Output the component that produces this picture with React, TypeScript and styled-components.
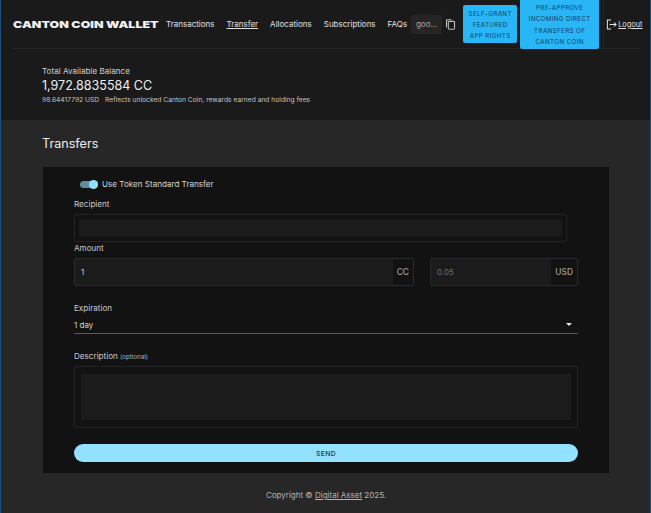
import { createGlobalStyle } from "styled-components";
import styled from "styled-components";

const GlobalStyle = createGlobalStyle`
html, body { margin: 0; padding: 0; background: #272727; }
* { box-sizing: border-box; }
`;

const Page = styled.div`
    width: 651px;
    height: 513px;
    overflow: hidden;
    border-left: 1px solid #1d4f7c;
    border-right: 1px solid #1d4f7c;
    background: #272727;
    color: #e4e4e4;
    font-family: Inter, "Liberation Sans", sans-serif;
`;

const Header = styled.header`
    height: 120px;
    background: #1a1a1a;
`;

const Nav = styled.nav`
    height: 49px;
    margin: 0 10px 0 12px;
    border-bottom: 1px solid #242424;
    display: flex;
    align-items: center;
`;

const Logo = styled.div`
    width: 153px;
    flex: none;
    font-size: 9.6px;
    font-weight: 900;
    letter-spacing: 0;
    color: #f2f2f2;
    white-space: nowrap;
    transform: scaleX(1.3);
    transform-origin: left center;
`;

const NavLink = styled.a<{ $active?: boolean; $gap: number }>`
    font-size: 8px;
    color: #e0e0e0;
    margin-right: ${(p) => p.$gap}px;
    white-space: nowrap;
    text-decoration: ${(p) => (p.$active ? "underline" : "none")};
`;

const PartyChip = styled.div`
    width: 31px;
    height: 19px;
    flex: none;
    border-radius: 3px;
    background: #252525;
    color: #a9a9a9;
    font-size: 8px;
    display: flex;
    align-items: center;
    justify-content: center;
`;

const CopyIcon = styled.svg`
    width: 11px;
    height: 11px;
    margin: 0 7px 0 3px;
    flex: none;
`;

const ActionButton = styled.button<{ $width: number; $height: number; $gap: number }>`
    width: ${(p) => p.$width}px;
    height: ${(p) => p.$height}px;
    flex: none;
    margin-right: ${(p) => p.$gap}px;
    padding: 1px 0 0;
    border: none;
    border-radius: 2px;
    background: #29b6f6;
    color: #14425c;
    font-family: inherit;
    font-size: 6.2px;
    font-weight: 400;
    line-height: 11.2px;
    letter-spacing: 0.4px;
    text-align: center;
`;

const LogoutArea = styled.div`
    align-self: stretch;
    border-left: 1px solid #242424;
    padding-left: 2px;
    display: flex;
    align-items: center;
    gap: 1px;
`;

const LogoutLink = styled.a`
    font-size: 7.4px;
    color: #e0e0e0;
    text-decoration: underline;
`;

const Balance = styled.section`
    padding: 17px 0 0 41px;
`;

const BalanceLabel = styled.div`
    font-size: 8.1px;
    line-height: 11px;
    color: #cfcfcf;
`;

const BalanceAmount = styled.div`
    font-size: 12.5px;
    line-height: 17px;
    color: #f0f0f0;
`;

const BalanceNote = styled.div`
    font-size: 6.7px;
    line-height: 10px;
    margin-top: 1px;
    color: #c4c4c4;
    display: flex;
    gap: 6px;
`;

const Main = styled.main`
    padding: 15px 41px 0 42px;
`;

const Title = styled.h1`
    margin: 0 0 15px -1px;
    font-size: 12.6px;
    line-height: 17px;
    font-weight: 400;
    color: #ececec;
`;

const Card = styled.div`
    height: 306px;
    background: #121212;
    padding: 0 31px;
`;

const SwitchRow = styled.div`
    height: 32px;
    padding: 2px 0 0 6px;
    display: flex;
    align-items: center;
    gap: 4px;
    font-size: 8.1px;
    color: #d4d4d4;
`;

const SwitchTrack = styled.div`
    position: relative;
    width: 18px;
    height: 7px;
    border-radius: 4px;
    background: #5f8c9f;
`;

const SwitchThumb = styled.div`
    position: absolute;
    right: 0;
    top: -1px;
    width: 9px;
    height: 9px;
    border-radius: 50%;
    background: #90e0ff;
`;

const Label = styled.label<{ $top?: number }>`
    display: block;
    font-size: 8.1px;
    line-height: 10px;
    color: #c9c9c9;
    margin-top: ${(p) => p.$top ?? 0}px;
`;

const OptionalNote = styled.span`
    font-size: 6.2px;
    line-height: 0;
    color: #b5b5b5;
`;

const EmptyField = styled.div<{ $width: number; $height: number; $padX: number; $padY: number }>`
    width: ${(p) => p.$width}px;
    height: ${(p) => p.$height}px;
    padding: ${(p) => p.$padY}px ${(p) => p.$padX}px;
    margin-top: 5px;
    border: 1px solid #232323;
    border-radius: 2px;
`;

const FieldFill = styled.div`
    height: 100%;
    background: #1b1b1b;
`;

const AmountRow = styled.div`
    display: grid;
    grid-template-columns: 340px 148px;
    column-gap: 16px;
    margin-top: 5px;
`;

const AmountField = styled.div`
    height: 28px;
    display: flex;
    border: 1px solid #2b2b2b;
    border-radius: 2px;
    background: #1b1b1b;
`;

const AmountValue = styled.div<{ $muted?: boolean }>`
    flex: 1;
    padding-left: 6px;
    display: flex;
    align-items: center;
    font-size: 8px;
    color: ${(p) => (p.$muted ? "#6f6f6f" : "#d0d0d0")};
`;

const Unit = styled.div`
    flex: none;
    padding: 0 4px;
    background: #121212;
    display: flex;
    align-items: center;
    justify-content: center;
    font-size: 8.4px;
    font-weight: 500;
    color: #a0a0a0;
`;

const Select = styled.div`
    height: 18px;
    margin-top: 3px;
    padding: 0 6px 0 0;
    border-bottom: 1px solid #5a5a5a;
    display: flex;
    align-items: center;
    justify-content: space-between;
    font-size: 8px;
    color: #d4d4d4;
`;

const Caret = styled.div`
    width: 0;
    height: 0;
    border-left: 3px solid transparent;
    border-right: 3px solid transparent;
    border-top: 3px solid #e8e8e8;
`;

const SendButton = styled.button`
    display: block;
    width: 100%;
    height: 18px;
    margin-top: 16px;
    padding: 0;
    border: none;
    border-radius: 9px;
    background: #92e2ff;
    color: #24363f;
    font-family: inherit;
    font-size: 6.8px;
    font-weight: 500;
    letter-spacing: 0.4px;
`;

const Footer = styled.footer`
    margin-top: 16px;
    text-align: center;
    font-size: 8px;
    line-height: 12px;
    color: #b4b4b4;
    a {
        color: inherit;
        text-decoration: underline;
    }
`;

const App = () => {
    return (
        <Page>
            <GlobalStyle />
            <Header>
                <Nav>
                    <Logo>CANTON COIN WALLET</Logo>
                    <NavLink $gap={12}>Transactions</NavLink>
                    <NavLink $gap={12} $active>Transfer</NavLink>
                    <NavLink $gap={12}>Allocations</NavLink>
                    <NavLink $gap={12}>Subscriptions</NavLink>
                    <NavLink $gap={4}>FAQs</NavLink>
                    <PartyChip>goo...</PartyChip>
                    <CopyIcon viewBox="0 0 12 12" fill="none" stroke="#bdbdbd" strokeWidth="1.2">
                        <rect x="3.6" y="2.6" width="6.8" height="8.6" rx="1" />
                        <path d="M1.6 9V1.8a1 1 0 0 1 1-1H7" />
                    </CopyIcon>
                    <ActionButton $width={54} $height={38} $gap={3}>
                        SELF-GRANT
                        <br />
                        FEATURED
                        <br />
                        APP RIGHTS
                    </ActionButton>
                    <ActionButton $width={79} $height={50} $gap={4}>
                        PRE-APPROVE
                        <br />
                        INCOMING DIRECT
                        <br />
                        TRANSFERS OF
                        <br />
                        CANTON COIN
                    </ActionButton>
                    <LogoutArea>
                        <svg width="11" height="11" viewBox="0 0 12 12" fill="none" stroke="#e4e4e4" strokeWidth="1.1">
                            <path d="M5.5 1H1.5v10h4" />
                            <path d="M4 6h7M8.8 3.8 11 6 8.8 8.2" />
                        </svg>
                        <LogoutLink>Logout</LogoutLink>
                    </LogoutArea>
                </Nav>
                <Balance>
                    <BalanceLabel>Total Available Balance</BalanceLabel>
                    <BalanceAmount>1,972.8835584 CC</BalanceAmount>
                    <BalanceNote>
                        <span>98.64417792 USD</span>
                        <span>Reflects unlocked Canton Coin, rewards earned and holding fees</span>
                    </BalanceNote>
                </Balance>
            </Header>
            <Main>
                <Title>Transfers</Title>
                <Card>
                    <SwitchRow>
                        <SwitchTrack>
                            <SwitchThumb />
                        </SwitchTrack>
                        Use Token Standard Transfer
                    </SwitchRow>
                    <Label>Recipient</Label>
                    <EmptyField $width={493} $height={28} $padX={4} $padY={4}>
                        <FieldFill />
                    </EmptyField>
                    <Label $top={1}>Amount</Label>
                    <AmountRow>
                        <AmountField>
                            <AmountValue>1</AmountValue>
                            <Unit>CC</Unit>
                        </AmountField>
                        <AmountField>
                            <AmountValue $muted>0.05</AmountValue>
                            <Unit>USD</Unit>
                        </AmountField>
                    </AmountRow>
                    <Label $top={17}>Expiration</Label>
                    <Select>
                        1 day
                        <Caret />
                    </Select>
                    <Label $top={17}>
                        Description <OptionalNote>(optional)</OptionalNote>
                    </Label>
                    <EmptyField $width={504} $height={62} $padX={6} $padY={7}>
                        <FieldFill />
                    </EmptyField>
                    <SendButton>SEND</SendButton>
                </Card>
                <Footer>
                    Copyright © <a>Digital Asset</a> 2025.
                </Footer>
            </Main>
        </Page>
    );
};

export default App;
